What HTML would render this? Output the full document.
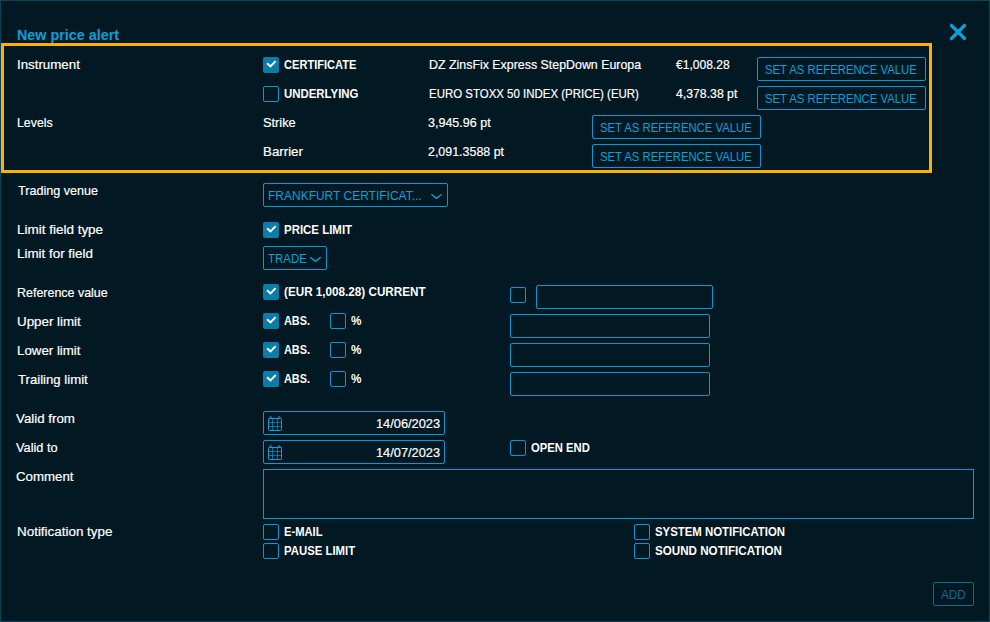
<!DOCTYPE html><html><head><meta charset="utf-8"><style>
*{margin:0;padding:0;box-sizing:border-box}
html,body{width:990px;height:622px;overflow:hidden;background:#021822}
body{position:relative;font-family:"Liberation Sans",sans-serif}
.t{position:absolute;white-space:pre;transform-origin:0 0;display:block}
.w{color:#ffffff} .rw{-webkit-text-stroke:0.2px #ffffff} .b{color:#0aa0d8} .d{color:#0b6a8e}
.bx{position:absolute;border:1px solid #0b98cf;border-radius:2px}
.cb{position:absolute;width:16px;height:16px;border:1px solid #0b98cf;border-radius:2px}
.cbc{position:absolute;width:16px;height:16px;background:#0a7ea8;border-radius:2px}
.cbc svg{position:absolute;left:0;top:0}
.mk{display:inline-block;width:0;height:0}
</style></head><body><div style="position:absolute;left:0;top:0;width:990px;height:622px;border:1px solid #0d4356"></div>
<div style="position:absolute;left:1px;top:43px;width:931px;height:130px;border:3px solid #ffb000"></div>
<svg style="position:absolute;left:945px;top:19px" width="26" height="26" viewBox="0 0 26 26"><path d="M6.5 6.5L19.5 19.5M19.5 6.5L6.5 19.5" stroke="#0aa0d8" stroke-width="3.2" stroke-linecap="round" fill="none"/></svg>
<div class="cbc" style="left:263px;top:57px"><svg width="16" height="16" viewBox="0 0 16 16"><path d="M4.1 6.2L7.5 9.4L12.6 4.1" stroke="#fff" stroke-width="1.9" fill="none" stroke-linecap="butt" stroke-linejoin="miter"/></svg></div>
<div class="cbc" style="left:263px;top:222px"><svg width="16" height="16" viewBox="0 0 16 16"><path d="M4.1 6.2L7.5 9.4L12.6 4.1" stroke="#fff" stroke-width="1.9" fill="none" stroke-linecap="butt" stroke-linejoin="miter"/></svg></div>
<div class="cbc" style="left:263px;top:284px"><svg width="16" height="16" viewBox="0 0 16 16"><path d="M4.1 6.2L7.5 9.4L12.6 4.1" stroke="#fff" stroke-width="1.9" fill="none" stroke-linecap="butt" stroke-linejoin="miter"/></svg></div>
<div class="cbc" style="left:263px;top:313px"><svg width="16" height="16" viewBox="0 0 16 16"><path d="M4.1 6.2L7.5 9.4L12.6 4.1" stroke="#fff" stroke-width="1.9" fill="none" stroke-linecap="butt" stroke-linejoin="miter"/></svg></div>
<div class="cbc" style="left:263px;top:342px"><svg width="16" height="16" viewBox="0 0 16 16"><path d="M4.1 6.2L7.5 9.4L12.6 4.1" stroke="#fff" stroke-width="1.9" fill="none" stroke-linecap="butt" stroke-linejoin="miter"/></svg></div>
<div class="cbc" style="left:263px;top:371px"><svg width="16" height="16" viewBox="0 0 16 16"><path d="M4.1 6.2L7.5 9.4L12.6 4.1" stroke="#fff" stroke-width="1.9" fill="none" stroke-linecap="butt" stroke-linejoin="miter"/></svg></div>
<div class="cb" style="left:263px;top:86px"></div>
<div class="cb" style="left:330px;top:313px"></div>
<div class="cb" style="left:330px;top:342px"></div>
<div class="cb" style="left:330px;top:371px"></div>
<div class="cb" style="left:510px;top:287px"></div>
<div class="cb" style="left:510px;top:440px"></div>
<div class="cb" style="left:263px;top:524px"></div>
<div class="cb" style="left:263px;top:543px"></div>
<div class="cb" style="left:634px;top:524px"></div>
<div class="cb" style="left:634px;top:543px"></div>
<div class="bx" style="left:757px;top:57px;width:169px;height:24px"></div>
<div class="bx" style="left:757px;top:86px;width:169px;height:24px"></div>
<div class="bx" style="left:592px;top:115px;width:169px;height:24px"></div>
<div class="bx" style="left:592px;top:144px;width:169px;height:24px"></div>
<div class="bx" style="left:263px;top:183px;width:185px;height:24px"></div>
<div class="bx" style="left:263px;top:246px;width:64px;height:24px"></div>
<svg style="position:absolute;left:430px;top:193px" width="14" height="8" viewBox="0 0 14 8"><path d="M1.3 1.2L6.5 5.3L11.7 1.2" stroke="#0aa0d8" stroke-width="1.4" fill="none"/></svg>
<svg style="position:absolute;left:309px;top:256px" width="14" height="8" viewBox="0 0 14 8"><path d="M1.3 1.2L6.5 5.3L11.7 1.2" stroke="#0aa0d8" stroke-width="1.4" fill="none"/></svg>
<div class="bx" style="left:536px;top:285px;width:177px;height:24px"></div>
<div class="bx" style="left:510px;top:314px;width:200px;height:24px"></div>
<div class="bx" style="left:510px;top:343px;width:200px;height:24px"></div>
<div class="bx" style="left:510px;top:372px;width:200px;height:24px"></div>
<div class="bx" style="left:263px;top:411px;width:182px;height:24px"></div>
<svg style="position:absolute;left:263px;top:411px" width="24" height="24" viewBox="0 0 24 24" fill="none" stroke="#0aa0d8" stroke-width="1"><rect x="5.5" y="7.5" width="13" height="12" rx="0.8"/><path d="M9.5 7.5V19.5M14.5 7.5V19.5M5.5 11.5H18.5M5.5 15.5H18.5" stroke-opacity="0.65"/><path d="M6.6 8C6.6 4.6 8.8 4.6 8.8 8M15.1 8C15.1 4.6 17.3 4.6 17.3 8" stroke-width="1"/></svg>
<div class="bx" style="left:263px;top:440px;width:182px;height:24px"></div>
<svg style="position:absolute;left:263px;top:440px" width="24" height="24" viewBox="0 0 24 24" fill="none" stroke="#0aa0d8" stroke-width="1"><rect x="5.5" y="7.5" width="13" height="12" rx="0.8"/><path d="M9.5 7.5V19.5M14.5 7.5V19.5M5.5 11.5H18.5M5.5 15.5H18.5" stroke-opacity="0.65"/><path d="M6.6 8C6.6 4.6 8.8 4.6 8.8 8M15.1 8C15.1 4.6 17.3 4.6 17.3 8" stroke-width="1"/></svg>
<div style="position:absolute;left:263px;top:469px;width:711px;height:50px;border:1px solid #0b98cf"></div>
<div class="bx" style="left:933px;top:582px;width:41px;height:24px;border-color:#0b6a8e"></div>
<span id="t0" class="t b" style="left:17.00px;top:27.00px;font-size:15px;line-height:15px;font-weight:700;transform:scaleX(0.9572);">New price alert<i class="mk"></i></span>
<span id="t1" class="t w rw" style="left:17.00px;top:58.01px;font-size:13.5px;line-height:13.5px;font-weight:400;transform:scaleX(0.9851);">Instrument<i class="mk"></i></span>
<span id="t2" class="t w rw" style="left:17.10px;top:116.01px;font-size:13.5px;line-height:13.5px;font-weight:400;transform:scaleX(0.9139);">Levels<i class="mk"></i></span>
<span id="t3" class="t w rw" style="left:18.00px;top:184.01px;font-size:13.5px;line-height:13.5px;font-weight:400;transform:scaleX(0.9330);">Trading venue<i class="mk"></i></span>
<span id="t4" class="t w rw" style="left:17.00px;top:223.01px;font-size:13.5px;line-height:13.5px;font-weight:400;transform:scaleX(0.9979);">Limit field type<i class="mk"></i></span>
<span id="t5" class="t w rw" style="left:17.00px;top:247.01px;font-size:13.5px;line-height:13.5px;font-weight:400;transform:scaleX(0.9922);">Limit for field<i class="mk"></i></span>
<span id="t6" class="t w rw" style="left:17.00px;top:286.01px;font-size:13.5px;line-height:13.5px;font-weight:400;transform:scaleX(0.9227);">Reference value<i class="mk"></i></span>
<span id="t7" class="t w rw" style="left:17.00px;top:315.01px;font-size:13.5px;line-height:13.5px;font-weight:400;transform:scaleX(0.9881);">Upper limit<i class="mk"></i></span>
<span id="t8" class="t w rw" style="left:17.00px;top:344.01px;font-size:13.5px;line-height:13.5px;font-weight:400;transform:scaleX(0.9846);">Lower limit<i class="mk"></i></span>
<span id="t9" class="t w rw" style="left:18.00px;top:373.01px;font-size:13.5px;line-height:13.5px;font-weight:400;transform:scaleX(0.9755);">Trailing limit<i class="mk"></i></span>
<span id="t10" class="t w rw" style="left:16.00px;top:412.01px;font-size:13.5px;line-height:13.5px;font-weight:400;transform:scaleX(0.9864);">Valid from<i class="mk"></i></span>
<span id="t11" class="t w rw" style="left:16.00px;top:441.01px;font-size:13.5px;line-height:13.5px;font-weight:400;transform:scaleX(0.9464);">Valid to<i class="mk"></i></span>
<span id="t12" class="t w rw" style="left:15.80px;top:470.01px;font-size:13.5px;line-height:13.5px;font-weight:400;transform:scaleX(0.9819);">Comment<i class="mk"></i></span>
<span id="t13" class="t w rw" style="left:17.00px;top:525.01px;font-size:13.5px;line-height:13.5px;font-weight:400;transform:scaleX(0.9940);">Notification type<i class="mk"></i></span>
<span id="t14" class="t w" style="left:283.90px;top:58.21px;font-size:13px;line-height:13px;font-weight:700;transform:scaleX(0.8521);">CERTIFICATE<i class="mk"></i></span>
<span id="t15" class="t w" style="left:283.90px;top:87.00px;font-size:13px;line-height:13px;font-weight:700;transform:scaleX(0.8787);">UNDERLYING<i class="mk"></i></span>
<span id="t16" class="t w" style="left:284.20px;top:223.00px;font-size:13px;line-height:13px;font-weight:700;transform:scaleX(0.8811);">PRICE LIMIT<i class="mk"></i></span>
<span id="t17" class="t w" style="left:284.20px;top:285.00px;font-size:13px;line-height:13px;font-weight:700;transform:scaleX(0.8994);">(EUR 1,008.28) CURRENT<i class="mk"></i></span>
<span id="t18" class="t w" style="left:284.00px;top:314.00px;font-size:13px;line-height:13px;font-weight:700;transform:scaleX(0.8387);">ABS.<i class="mk"></i></span>
<span id="t19" class="t w" style="left:284.00px;top:343.00px;font-size:13px;line-height:13px;font-weight:700;transform:scaleX(0.8387);">ABS.<i class="mk"></i></span>
<span id="t20" class="t w" style="left:284.00px;top:372.00px;font-size:13px;line-height:13px;font-weight:700;transform:scaleX(0.8387);">ABS.<i class="mk"></i></span>
<span id="t21" class="t w" style="left:350.90px;top:314.00px;font-size:13px;line-height:13px;font-weight:700;transform:scaleX(0.9036);">%<i class="mk"></i></span>
<span id="t22" class="t w" style="left:350.90px;top:343.00px;font-size:13px;line-height:13px;font-weight:700;transform:scaleX(0.9036);">%<i class="mk"></i></span>
<span id="t23" class="t w" style="left:350.90px;top:372.00px;font-size:13px;line-height:13px;font-weight:700;transform:scaleX(0.9036);">%<i class="mk"></i></span>
<span id="t24" class="t w" style="left:531.20px;top:440.80px;font-size:13px;line-height:13px;font-weight:700;transform:scaleX(0.8665);">OPEN END<i class="mk"></i></span>
<span id="t25" class="t w" style="left:283.90px;top:524.80px;font-size:13px;line-height:13px;font-weight:700;transform:scaleX(0.8615);">E-MAIL<i class="mk"></i></span>
<span id="t26" class="t w" style="left:283.90px;top:543.71px;font-size:13px;line-height:13px;font-weight:700;transform:scaleX(0.8745);">PAUSE LIMIT<i class="mk"></i></span>
<span id="t27" class="t w" style="left:655.00px;top:524.80px;font-size:13px;line-height:13px;font-weight:700;transform:scaleX(0.8756);">SYSTEM NOTIFICATION<i class="mk"></i></span>
<span id="t28" class="t w" style="left:655.00px;top:543.71px;font-size:13px;line-height:13px;font-weight:700;transform:scaleX(0.8940);">SOUND NOTIFICATION<i class="mk"></i></span>
<span id="t29" class="t w rw" style="left:263.20px;top:116.01px;font-size:13.5px;line-height:13.5px;font-weight:400;transform:scaleX(0.9482);">Strike<i class="mk"></i></span>
<span id="t30" class="t w rw" style="left:263.20px;top:145.01px;font-size:13.5px;line-height:13.5px;font-weight:400;transform:scaleX(0.9860);">Barrier<i class="mk"></i></span>
<span id="t31" class="t w rw" style="left:428.50px;top:57.81px;font-size:13.5px;line-height:13.5px;font-weight:400;transform:scaleX(0.9180);">DZ ZinsFix Express StepDown Europa<i class="mk"></i></span>
<span id="t32" class="t w rw" style="left:428.50px;top:86.81px;font-size:13.5px;line-height:13.5px;font-weight:400;transform:scaleX(0.8488);">EURO STOXX 50 INDEX (PRICE) (EUR)<i class="mk"></i></span>
<span id="t33" class="t w rw" style="left:428.10px;top:116.01px;font-size:13.5px;line-height:13.5px;font-weight:400;transform:scaleX(0.9270);">3,945.96 pt<i class="mk"></i></span>
<span id="t34" class="t w rw" style="left:428.10px;top:145.01px;font-size:13.5px;line-height:13.5px;font-weight:400;transform:scaleX(0.9206);">2,091.3588 pt<i class="mk"></i></span>
<span id="t35" class="t w rw" style="left:676.30px;top:58.01px;font-size:13.5px;line-height:13.5px;font-weight:400;transform:scaleX(0.8923);">€1,008.28<i class="mk"></i></span>
<span id="t36" class="t w rw" style="left:676.00px;top:87.01px;font-size:13.5px;line-height:13.5px;font-weight:400;transform:scaleX(0.9079);">4,378.38 pt<i class="mk"></i></span>
<span id="t37" class="t w rw" style="left:375.90px;top:417.00px;font-size:13px;line-height:13px;font-weight:400;transform:scaleX(0.9854);">14/06/2023<i class="mk"></i></span>
<span id="t38" class="t w rw" style="left:375.90px;top:446.00px;font-size:13px;line-height:13px;font-weight:400;transform:scaleX(0.9854);">14/07/2023<i class="mk"></i></span>
<span id="t39" class="t b" style="left:764.90px;top:63.71px;font-size:12px;line-height:12px;font-weight:400;transform:scaleX(0.9428);">SET AS REFERENCE VALUE<i class="mk"></i></span>
<span id="t40" class="t b" style="left:764.90px;top:92.71px;font-size:12px;line-height:12px;font-weight:400;transform:scaleX(0.9428);">SET AS REFERENCE VALUE<i class="mk"></i></span>
<span id="t41" class="t b" style="left:599.90px;top:121.71px;font-size:12px;line-height:12px;font-weight:400;transform:scaleX(0.9428);">SET AS REFERENCE VALUE<i class="mk"></i></span>
<span id="t42" class="t b" style="left:599.90px;top:150.71px;font-size:12px;line-height:12px;font-weight:400;transform:scaleX(0.9428);">SET AS REFERENCE VALUE<i class="mk"></i></span>
<span id="t43" class="t b" style="left:268.00px;top:190.01px;font-size:12.5px;line-height:12.5px;font-weight:400;transform:scaleX(0.9593);">FRANKFURT CERTIFICAT...<i class="mk"></i></span>
<span id="t44" class="t b" style="left:267.50px;top:253.01px;font-size:12.5px;line-height:12.5px;font-weight:400;transform:scaleX(0.9178);">TRADE<i class="mk"></i></span>
<span id="t45" class="t d" style="left:941.20px;top:589.01px;font-size:12px;line-height:12px;font-weight:400;transform:scaleX(0.9773);">ADD<i class="mk"></i></span></body></html>
